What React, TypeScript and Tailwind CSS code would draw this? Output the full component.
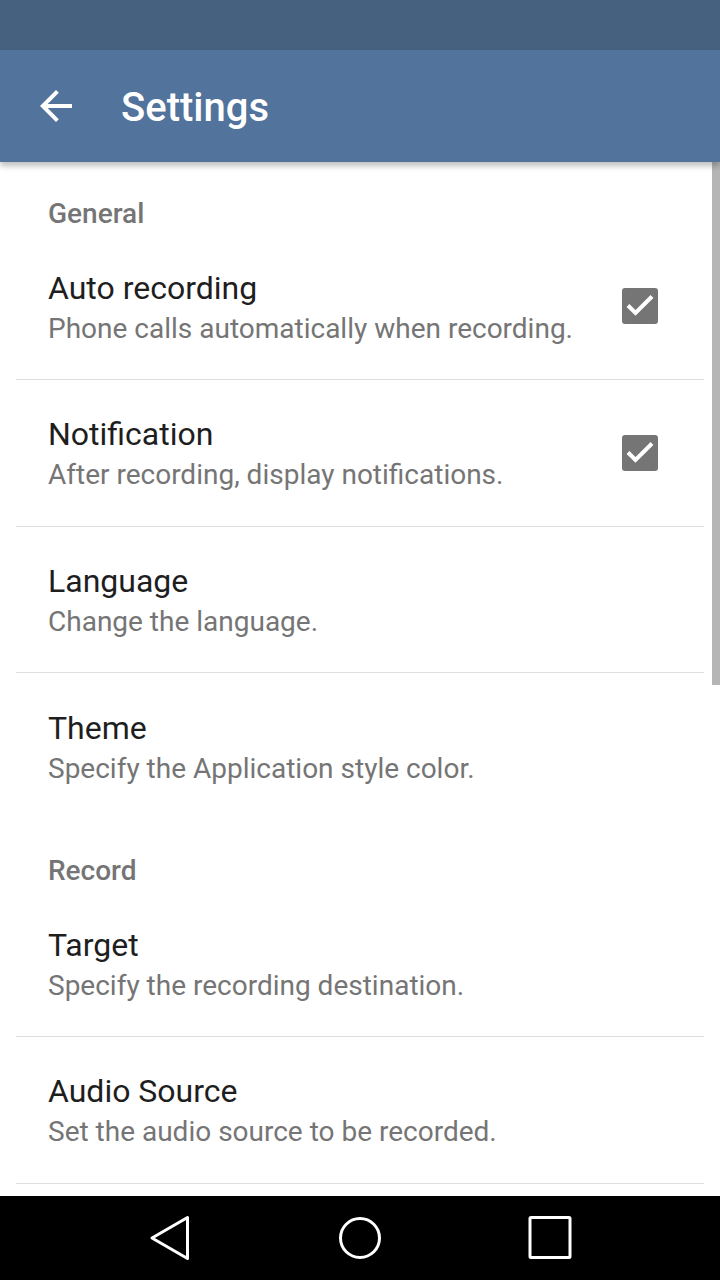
import React from "react";

type Pref = { title: string; summary: string; checked?: boolean; divider?: boolean };

const general: Pref[] = [
  { title: "Auto recording", summary: "Phone calls automatically when recording.", checked: true, divider: true },
  { title: "Notification", summary: "After recording, display notifications.", checked: true, divider: true },
  { title: "Language", summary: "Change the language.", divider: true },
  { title: "Theme", summary: "Specify the Application style color." },
];

const record: Pref[] = [
  { title: "Target", summary: "Specify the recording destination.", divider: true },
  { title: "Audio Source", summary: "Set the audio source to be recorded.", divider: true },
];

const Checkbox = () => (
  <div className="w-[36px] h-[36px] rounded-[3px] bg-[#757575]">
    <svg width="36" height="36" viewBox="0 0 36 36">
      <path d="M6 17.5 L13.5 25 L30 8.5" fill="none" stroke="#fff" strokeWidth="4" />
    </svg>
  </div>
);

const Category = ({ label }: { label: string }) => (
  <div className="pl-[48px] pt-[32px] h-[71.5px] text-[28px] leading-[40px] font-medium text-[#757575]">
    {label}
  </div>
);

const Row = ({ pref }: { pref: Pref }) => (
  <div className="mx-[16px]">
    <div className={`${pref.divider ? "h-[145.5px]" : "h-[146px]"} flex items-center pl-[32px] pr-[46px]`}>
      <div className="flex-1 pt-[4px]">
        <div className="text-[32px] leading-[40px] text-[#1e1e1e]">{pref.title}</div>
        <div className="mt-[1px] text-[28px] leading-[40px] text-[#757575]">{pref.summary}</div>
      </div>
      {pref.checked && <Checkbox />}
    </div>
    {pref.divider && <div className="h-[1px] bg-[#dedede]" />}
  </div>
);

export default function App() {
  return (
    <div className="w-[720px] h-[1280px] flex flex-col bg-white overflow-hidden" style={{ fontFamily: "Roboto, 'Noto Sans', sans-serif" }}>
      <div className="h-[50px] bg-[#46607f] shrink-0" />
      <div className="h-[112px] bg-[#52739b] shrink-0 flex items-center relative z-10 shadow-[0_4px_6px_rgba(0,0,0,0.25)]">
        <svg className="ml-[32px]" width="48" height="48" viewBox="0 0 24 24">
          <path d="M20 11H7.83l5.59-5.59L12 4l-8 8 8 8 1.41-1.41L7.83 13H20v-2z" fill="#fff" />
        </svg>
        <div className="ml-[41px] pt-[4px] text-[40px] font-medium text-white leading-none">Settings</div>
      </div>
      <div className="flex-1 relative overflow-hidden">
        <Category label="General" />
        {general.map((p) => (
          <Row key={p.title} pref={p} />
        ))}
        <Category label="Record" />
        {record.map((p) => (
          <Row key={p.title} pref={p} />
        ))}
        <div className="absolute right-0 top-0 w-[8px] h-[523px] bg-[#b5b5b5]" />
      </div>
      <div className="h-[84px] bg-black shrink-0 flex items-center justify-center gap-[142px]">
        <svg width="48" height="48" viewBox="0 0 48 48">
          <path d="M41.5 3.5 L41.5 44.5 L6 24 Z" fill="none" stroke="#fff" strokeWidth="3" strokeLinejoin="round" />
        </svg>
        <svg width="48" height="48" viewBox="0 0 48 48">
          <circle cx="24" cy="24" r="19.5" fill="none" stroke="#fff" strokeWidth="3" />
        </svg>
        <svg width="48" height="48" viewBox="0 0 48 48">
          <rect x="4" y="3.5" width="40" height="40" rx="1" fill="none" stroke="#fff" strokeWidth="3" />
        </svg>
      </div>
    </div>
  );
}
